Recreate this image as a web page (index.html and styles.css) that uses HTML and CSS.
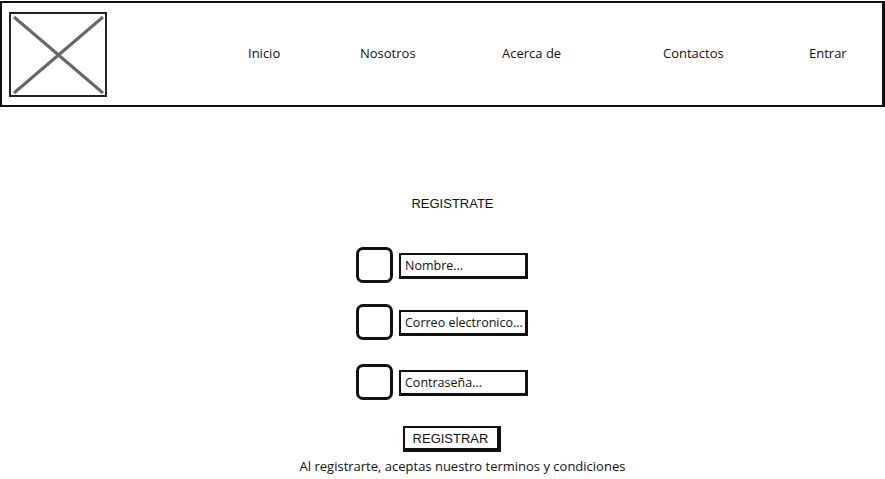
FILE: index.html
```html
<!DOCTYPE html>
<html lang="es">
<head>
<meta charset="utf-8">
<title>Registrate</title>
<link rel="stylesheet" href="styles.css">
</head>
<body>
<header class="topbar">
  <div class="logo">
    <svg width="97" height="84" viewBox="0 0 97 84">
      <line x1="4" y1="4" x2="93" y2="80" stroke="#666" stroke-width="3"/>
      <line x1="93" y1="4" x2="4" y2="80" stroke="#666" stroke-width="3"/>
    </svg>
  </div>
  <nav class="nav">
    <span class="nav-item">Inicio</span>
    <span class="nav-item">Nosotros</span>
    <span class="nav-item">Acerca de</span>
    <span class="nav-item">Contactos</span>
    <span class="nav-item">Entrar</span>
  </nav>
</header>
<main class="form">
  <h1 class="title">REGISTRATE</h1>
  <div class="row row-1">
    <span class="check"></span>
    <span class="field">Nombre...</span>
  </div>
  <div class="row row-2">
    <span class="check"></span>
    <span class="field">Correo electronico...</span>
  </div>
  <div class="row row-3">
    <span class="check"></span>
    <span class="field">Contraseña...</span>
  </div>
  <button class="btn">REGISTRAR</button>
  <p class="terms">Al registrarte, aceptas nuestro terminos y condiciones</p>
</main>
</body>
</html>
```
FILE: styles.css
```css
* { box-sizing: border-box; }
html, body { margin: 0; padding: 0; background: #fff; }
body {
  font-family: "Open Sans", "Liberation Sans", sans-serif;
  font-size: 13px;
  color: #111;
  width: 885px;
  height: 479px;
  overflow: hidden;
}
.topbar {
  margin-top: 1px;
  width: 885px;
  height: 106px;
  border: 2px solid #111;
  border-right-width: 3px;
  display: flex;
  align-items: flex-start;
}
.logo {
  margin: 9px 0 0 7px;
  width: 98px;
  height: 85px;
  border: 2px solid #222;
  flex: none;
}
.logo svg { display: block; margin: -1px 0 0 -1px; }
.nav {
  display: grid;
  grid-template-columns: 112px 142px 161px 146px auto;
  margin: 41px 0 0 141px;
}
.nav-item { line-height: 18px; }
.form {
  display: flex;
  flex-direction: column;
  align-items: center;
}
.title {
  font-family: "Liberation Sans", sans-serif;
  font-size: 13px;
  font-weight: normal;
  margin: 88px 0 0 20px;
  line-height: 18px;
}
.row {
  display: flex;
  align-items: center;
  gap: 6px;
  margin-left: -1px;
}
.row-1 { margin-top: 34px; }
.row-2 { margin-top: 21px; }
.row-3 { margin-top: 24px; }
.check {
  width: 37px;
  height: 36px;
  border: 3px solid #111;
  border-radius: 7px;
}
.field {
  width: 129px;
  height: 26px;
  border: 2px solid #111;
  border-right-width: 3px;
  border-bottom-width: 3px;
  padding: 0 4px;
  font-size: 12.5px;
  line-height: 21px;
  margin-top: 2px;
  white-space: nowrap;
  overflow: hidden;
}
.btn {
  margin: 26px 0 0 18px;
  width: 98px;
  height: 26px;
  border: 2px solid #111;
  border-right-width: 4px;
  border-bottom-width: 4px;
  background: #fff;
  font-family: "Liberation Sans", sans-serif;
  font-size: 13px;
  color: #111;
  padding: 0;
  line-height: 19px;
}
.terms {
  margin: 6px 0 0 40px;
  line-height: 16px;
}
```
